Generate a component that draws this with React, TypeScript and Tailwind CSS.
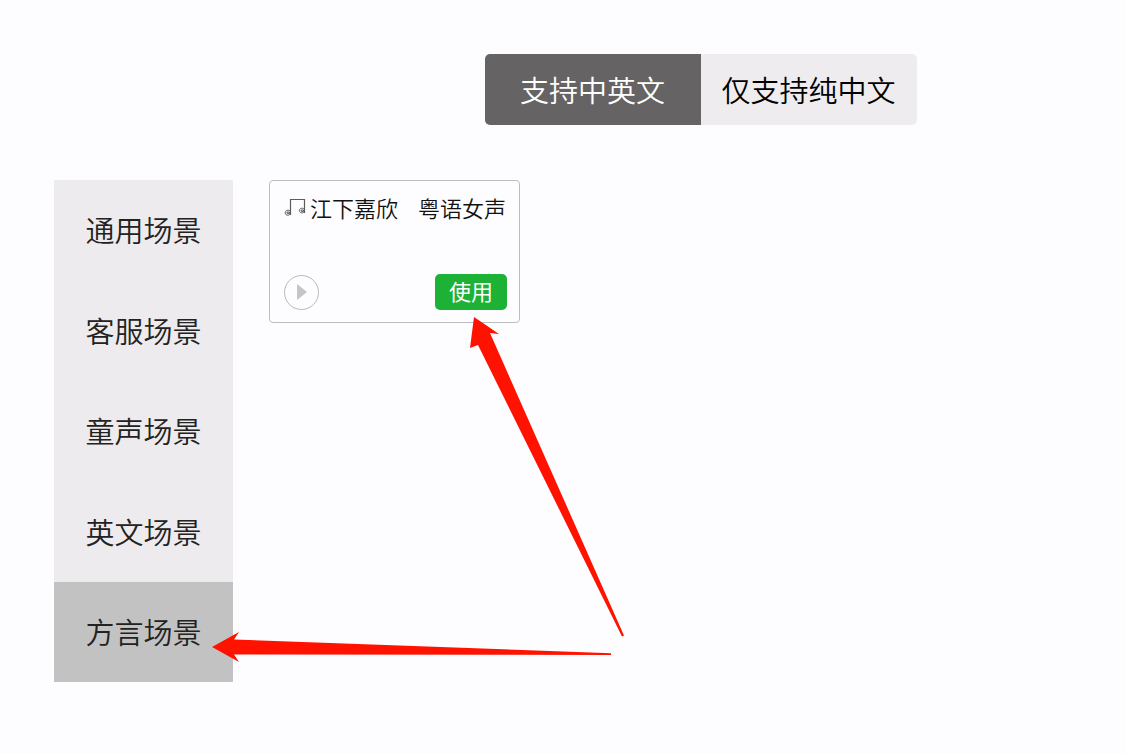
import React, { useState } from 'react';

const scenes = ['通用场景', '客服场景', '童声场景', '英文场景', '方言场景'];
const languages = ['支持中英文', '仅支持纯中文'];

const MusicIcon = () => (
    <svg className="h-5 w-[22px] shrink-0" viewBox="0 0 22 20" fill="none" stroke="#5c5c5c" aria-hidden="true">
        <path d="M6.5 18V2.5H20.5V16" strokeWidth="1.2" />
        <path d="M6 14C5 12.6 1.2 13 1.2 15.8C1.2 18.6 5 18.8 6 17.2M3 15H5.5V16.6H3.2Z" />
        <path d="M20 12C19 10.6 15.4 11 15.4 13.6C15.4 16.2 19 16.4 20 15M17.2 13H19.5V14.4H17.4Z" />
    </svg>
);

const Arrows = () => (
    <svg className="pointer-events-none absolute left-0 top-0 h-[754px] w-[1125px]" viewBox="0 0 1125 754" fill="#ff1200" aria-hidden="true">
        <path d="M474 317L499 334L490 333L624 635.5L622 636.5L478 345L470 348Z" />
        <path d="M212 647L239 632L234 639.5L611 653.3V655L234 654.5L239 662Z" />
    </svg>
);

const VoiceCard = () => (
    <article className="flex h-[143px] w-[251px] flex-col justify-between rounded-[4px] border border-[#bdbcbe] px-3 pb-3 pt-3">
        <h2 className="flex items-center text-[22px] font-[350] leading-7 text-[#111111]">
            <span className="flex items-center gap-1 pl-0.5">
                <MusicIcon />
                <span>江下嘉欣</span>
            </span>
            <span className="ml-5 whitespace-nowrap">粤语女声</span>
        </h2>
        <div className="flex items-center justify-between pl-0.5">
            <button type="button" aria-label="试听" className="flex size-[35px] items-center justify-center rounded-full border border-[#b9b8ba]">
                <svg className="h-4 w-2.5" viewBox="0 0 10 16" fill="#c5c4c6" aria-hidden="true">
                    <path d="M0 0L10 8L0 16Z" />
                </svg>
            </button>
            <button type="button" className="h-9 w-[72px] rounded-[5px] bg-[#1db236] pb-1 text-[22px] leading-none text-white">使用</button>
        </div>
    </article>
);

const App: React.FC = () => {
    const [scene, setScene] = useState('方言场景');
    const [language, setLanguage] = useState('支持中英文');

    return (
        <div className="relative min-h-screen overflow-hidden bg-[#fdfcfe] pt-[54px] font-['Noto_Sans_CJK_SC',sans-serif]">
            <div className="flex justify-center pl-[276px]">
                <div className="flex overflow-hidden rounded-[5px]">
                    {languages.map((item) => (
                        <button
                            key={item}
                            type="button"
                            aria-pressed={language === item}
                            onClick={() => setLanguage(item)}
                            className={`h-[71px] w-[216px] text-[29px] font-[350] ${language === item ? 'bg-[#656364] text-white' : 'bg-[#eeecee] text-black'}`}
                        >
                            {item}
                        </button>
                    ))}
                </div>
            </div>

            <div className="mt-[55px] flex items-start gap-9 px-[54px]">
                <nav className="flex min-h-[502px] w-[179px] shrink-0 flex-col bg-[#edebed]">
                    {scenes.map((item) => (
                        <button
                            key={item}
                            type="button"
                            onClick={() => setScene(item)}
                            className={`flex-1 text-[29px] font-[350] text-[#222222] ${scene === item ? 'bg-[#c3c2c3]' : ''}`}
                        >
                            {item}
                        </button>
                    ))}
                </nav>
                <main>
                    <VoiceCard />
                </main>
            </div>

            <Arrows />
        </div>
    );
};

export default App;
